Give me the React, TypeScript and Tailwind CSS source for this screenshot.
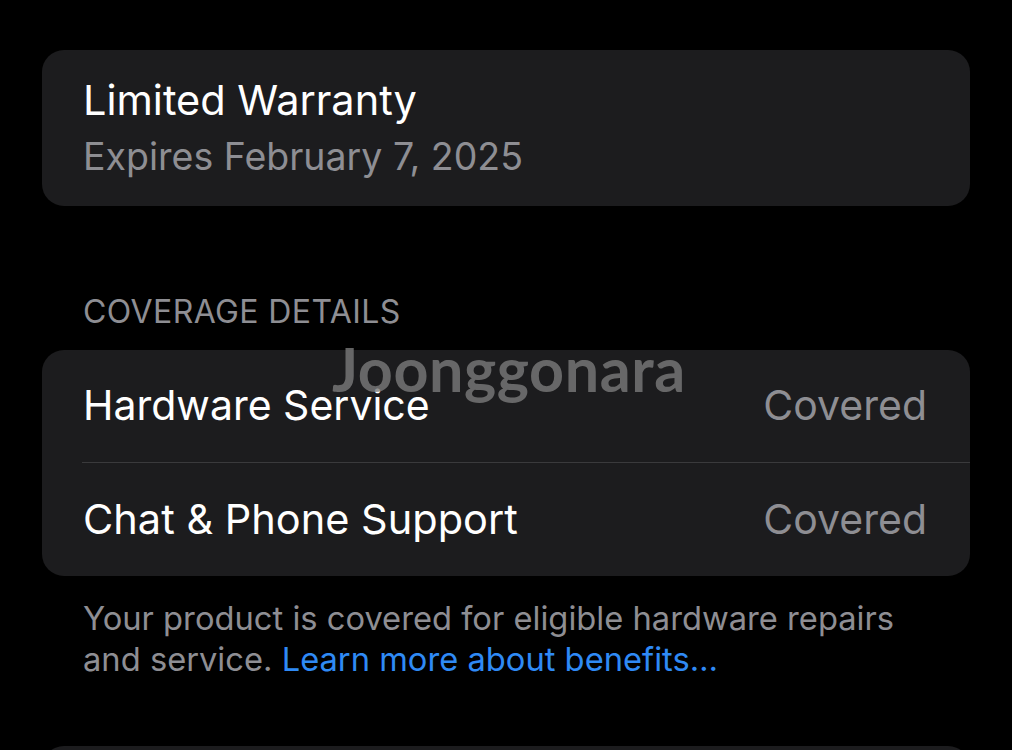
import React from "react";

export default function App() {
  return (
    <div className="relative h-[750px] overflow-hidden bg-black px-[42px] pt-[50px] font-['Inter','Noto_Sans',sans-serif] antialiased">
      <div className="rounded-[22px] bg-[#1c1c1e] pl-[41px] pt-[24px] pb-[23px]">
        <div className="text-[41.5px] leading-[52px] text-white">Limited Warranty</div>
        <div className="mt-[5px] text-[37.5px] leading-[52px] text-[#8e8e93]">Expires February 7, 2025</div>
      </div>

      <div className="mt-[86px] mb-[18px] pl-[41px] text-[32px] leading-[40px] tracking-[0.4px] uppercase text-[#8e8e93]">
        Coverage Details
      </div>

      <div className="rounded-[22px] bg-[#1c1c1e]">
        <div className="flex h-[112px] items-center justify-between pl-[41px] pr-[43px]">
          <span className="text-[41px] text-white">Hardware Service</span>
          <span className="text-[41px] text-[#8e8e93]">Covered</span>
        </div>
        <div className="ml-[40px] h-px bg-[#3a3a3c]" />
        <div className="flex h-[113px] items-center justify-between pl-[41px] pr-[43px]">
          <span className="text-[41.5px] text-white">Chat &amp; Phone Support</span>
          <span className="text-[41px] text-[#8e8e93]">Covered</span>
        </div>
      </div>

      <div className="mt-[22px] pl-[41px] pr-[40px] text-[32.7px] leading-[41px] text-[#8e8e93]">
        Your product is covered for eligible hardware repairs and service.{" "}
        <span className="text-[#2f8af5]">Learn more about benefits…</span>
      </div>

      <div className="mt-[66px] h-[80px] rounded-[22px] bg-[#1c1c1e]" />

      <div className="pointer-events-none absolute left-[332px] top-[333px] font-['Lato',sans-serif] text-[61px] font-bold leading-[72px] tracking-[0.6px] text-[#7a7a7a]/80">
        Joonggonara
      </div>
    </div>
  );
}
